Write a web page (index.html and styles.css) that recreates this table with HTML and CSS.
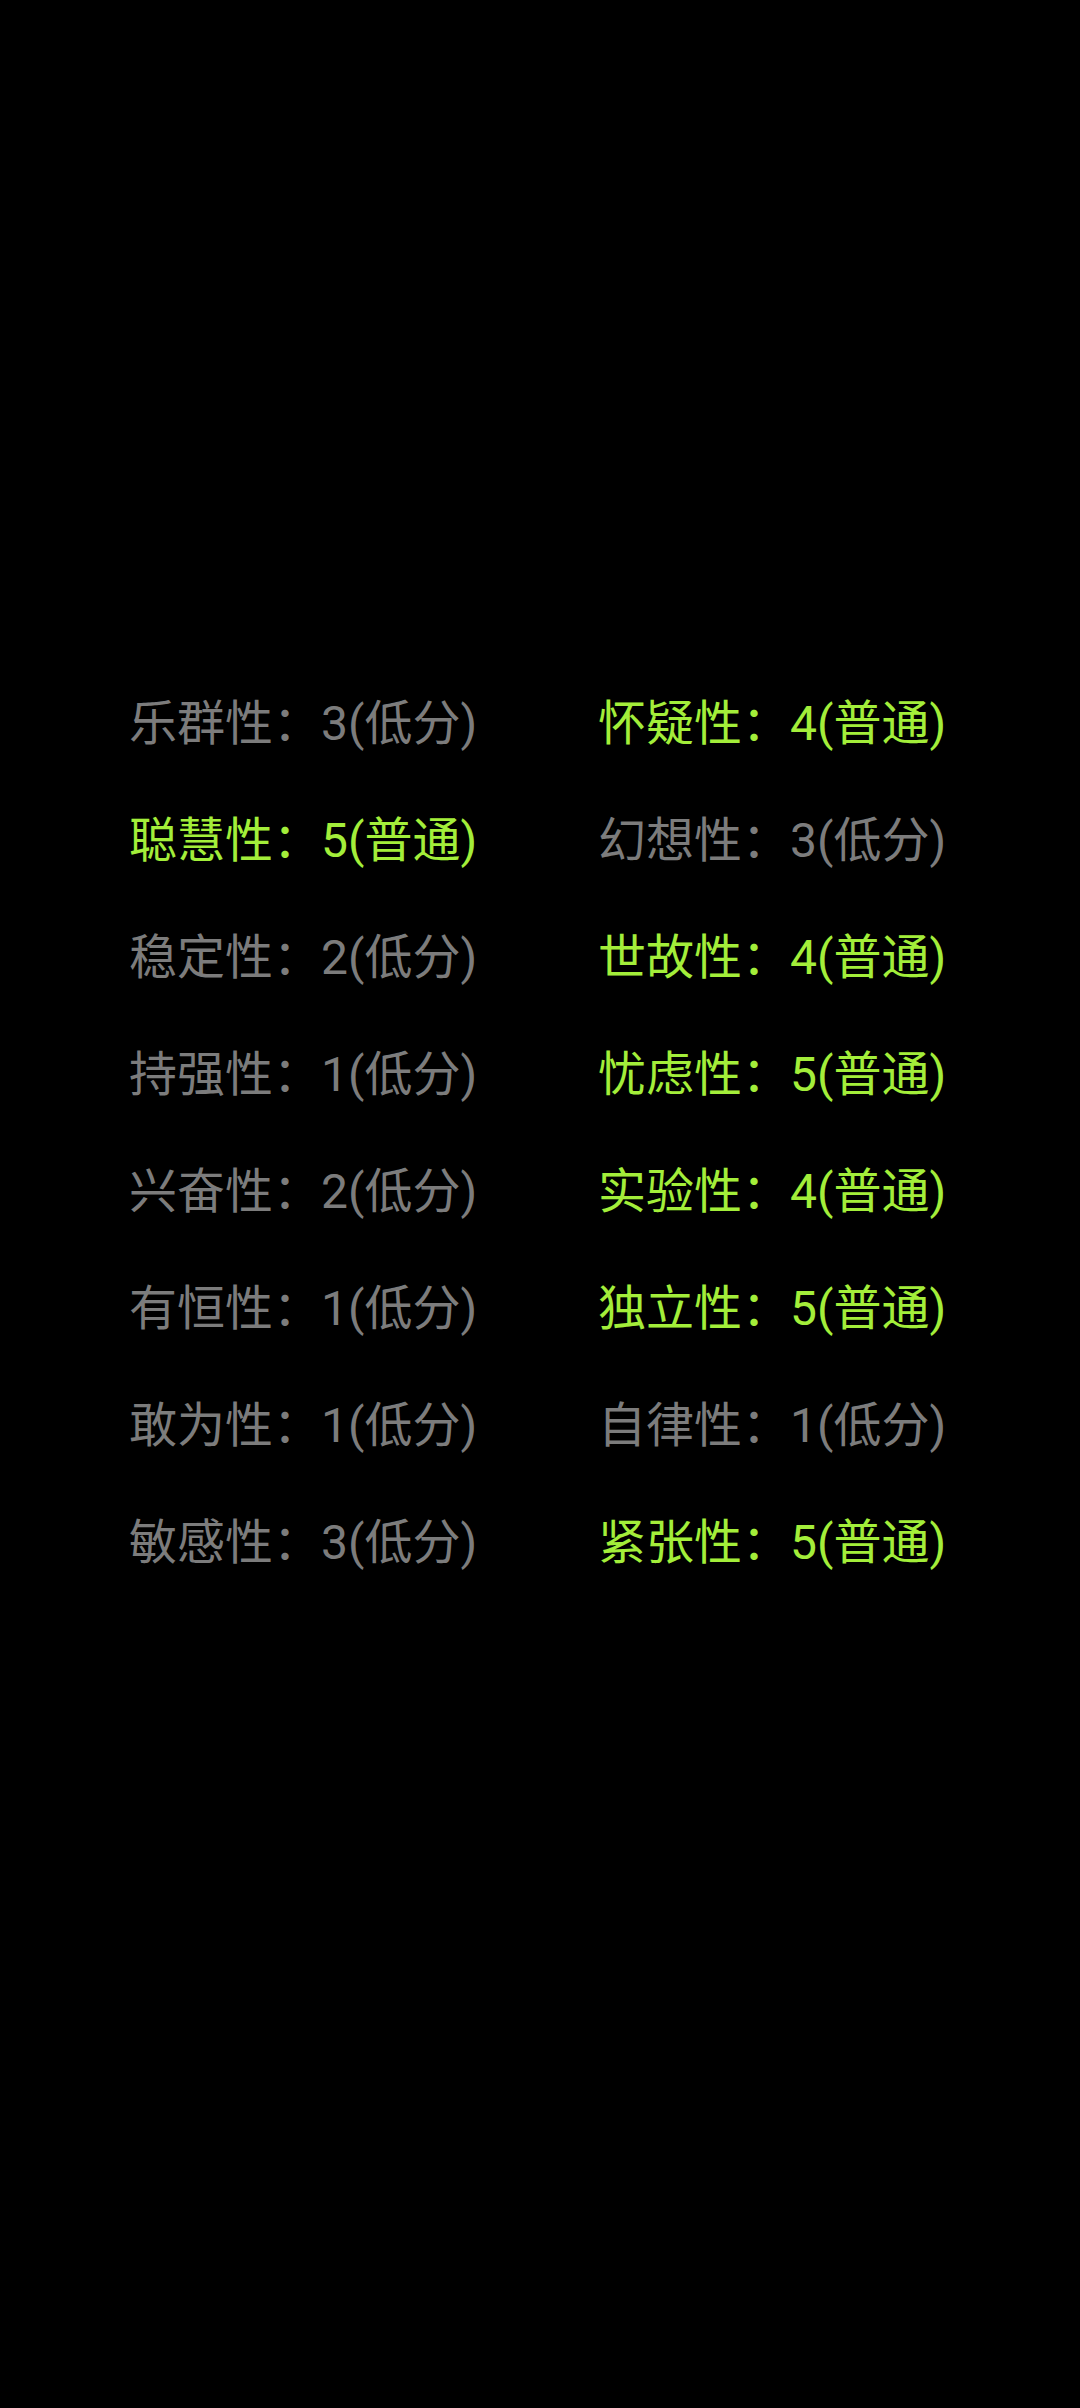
FILE: index.html
```html
<!DOCTYPE html>
<html lang="zh-CN">
<head>
<meta charset="utf-8">
<link rel="stylesheet" href="styles.css">
</head>
<body>
<main class="screen">
  <div class="grid">
    <div class="item low">乐群性：3(低分)</div>
    <div class="item mid">怀疑性：4(普通)</div>
    <div class="item mid">聪慧性：5(普通)</div>
    <div class="item low">幻想性：3(低分)</div>
    <div class="item low">稳定性：2(低分)</div>
    <div class="item mid">世故性：4(普通)</div>
    <div class="item low">持强性：1(低分)</div>
    <div class="item mid">忧虑性：5(普通)</div>
    <div class="item low">兴奋性：2(低分)</div>
    <div class="item mid">实验性：4(普通)</div>
    <div class="item low">有恒性：1(低分)</div>
    <div class="item mid">独立性：5(普通)</div>
    <div class="item low">敢为性：1(低分)</div>
    <div class="item low">自律性：1(低分)</div>
    <div class="item low">敏感性：3(低分)</div>
    <div class="item mid">紧张性：5(普通)</div>
  </div>
</main>
</body>
</html>
```
FILE: styles.css
```css
html, body {
  margin: 0;
  padding: 0;
  background: #000;
}
.screen {
  width: 1080px;
  height: 2408px;
  background: #000;
  box-sizing: border-box;
  padding-top: 665px;
  padding-left: 129px;
}
.grid {
  display: grid;
  grid-template-columns: 469px 400px;
}
.item {
  font-family: Roboto, "Noto Sans CJK SC", sans-serif;
  font-size: 48px;
  line-height: 117px;
  white-space: nowrap;
}
.low {
  color: #7c7c7c;
}
.mid {
  color: #a3ee3a;
}
```
